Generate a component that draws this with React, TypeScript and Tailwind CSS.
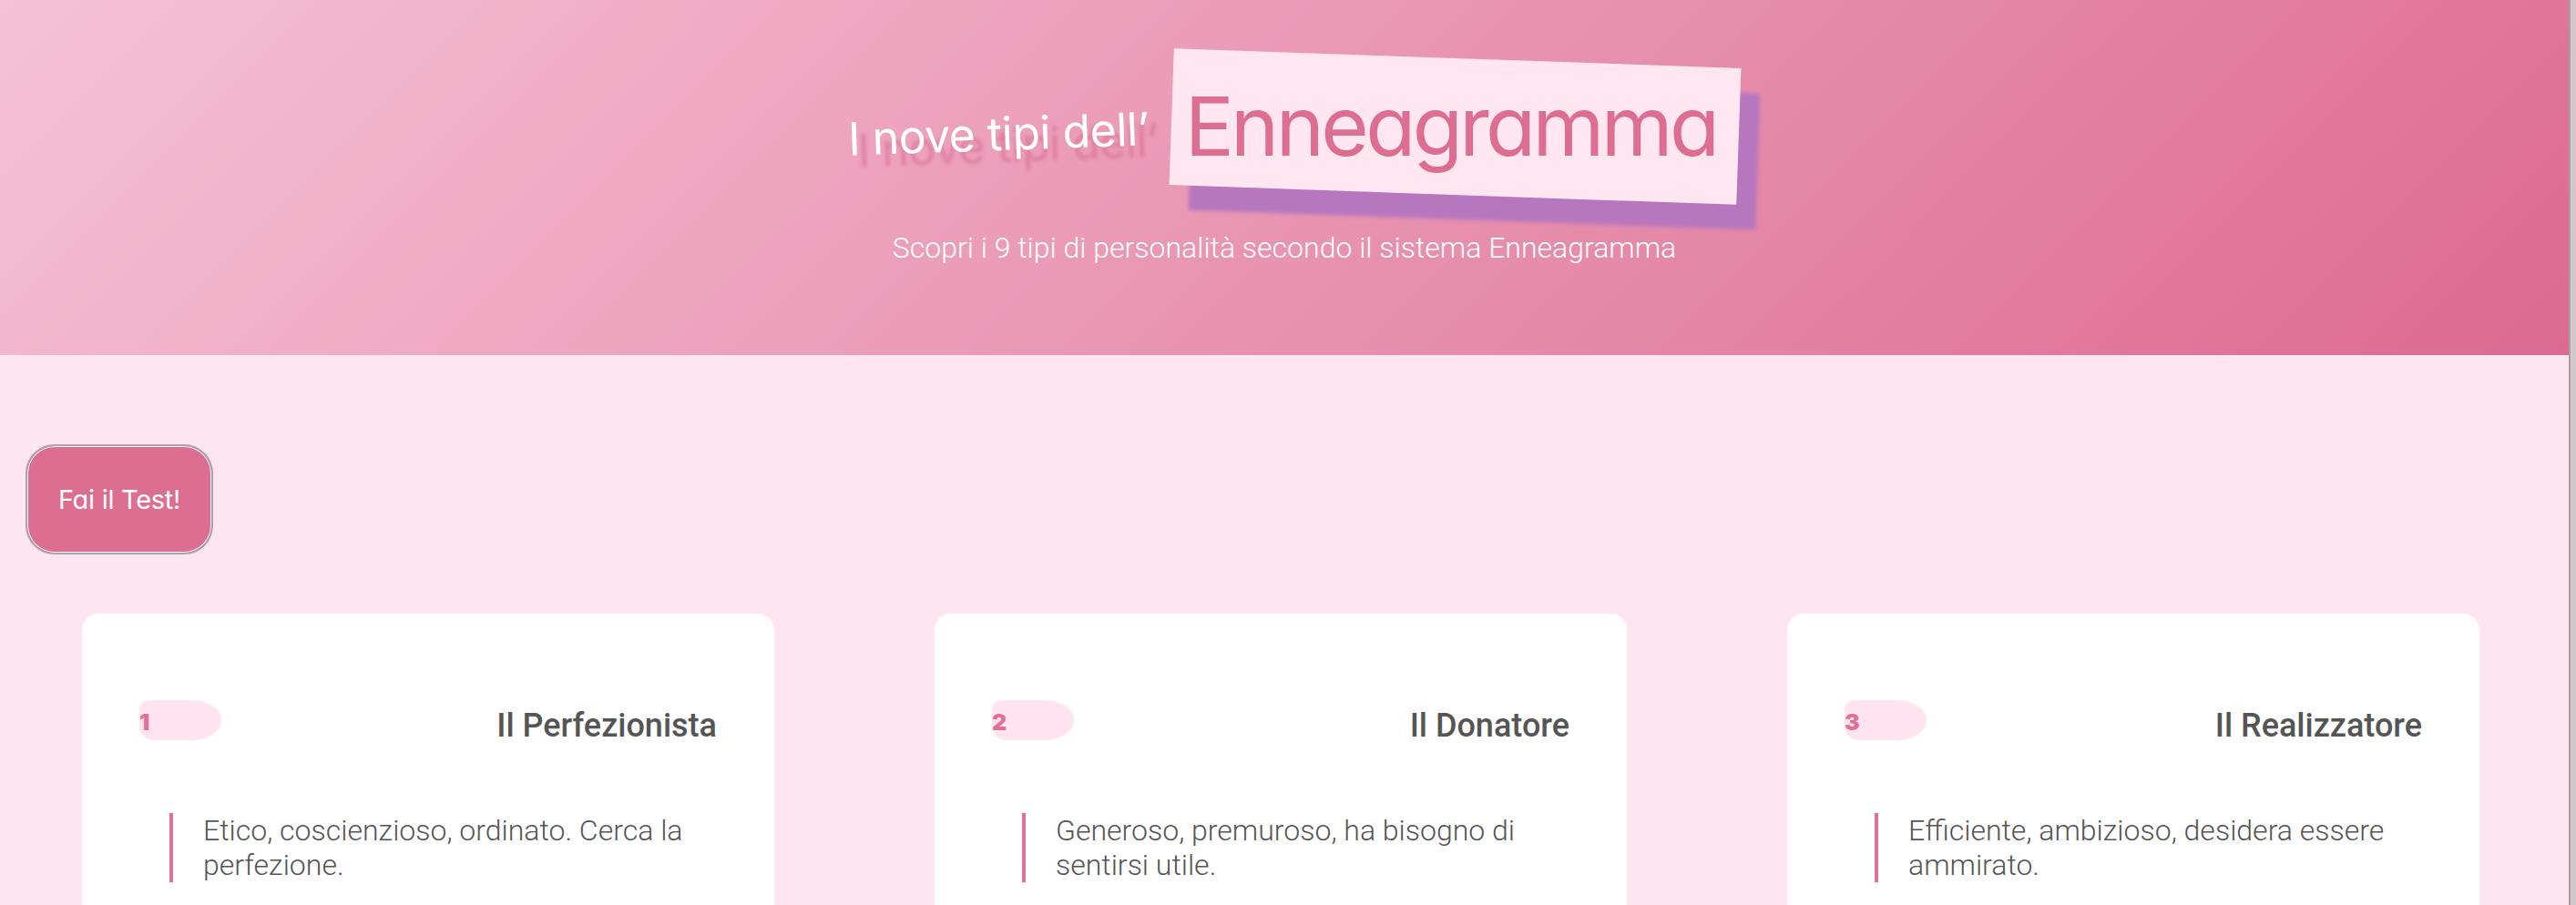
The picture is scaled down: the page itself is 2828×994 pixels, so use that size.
const types = [
  { n: 1, title: "Il Perfezionista", desc: "Etico, coscienzioso, ordinato. Cerca la perfezione." },
  { n: 2, title: "Il Donatore", desc: "Generoso, premuroso, ha bisogno di sentirsi utile." },
  { n: 3, title: "Il Realizzatore", desc: "Efficiente, ambizioso, desidera essere ammirato." },
];

const display = "font-['Inter',sans-serif] [font-feature-settings:'cv11']";

function TypeCard({ n, title, desc }: { n: number; title: string; desc: string }) {
  return (
    <div className="rounded-[18px] bg-white px-[63px] pt-[95px] pb-[60px]">
      <div className="flex items-start justify-between">
        <div className="relative h-[44px] w-[90px] rounded-[10px_32px_32px_16px/10px_22px_22px_16px] bg-[#ffe4ef]">
          <span className="absolute left-0 top-[12px] font-['Inter',sans-serif] text-[25px] font-black leading-[25px] text-[#e07095]">
            {n}
          </span>
        </div>
        <h2 className="mt-[4px] font-['Roboto',sans-serif] text-[36px] font-medium leading-[48px] text-[#555]">
          {title}
        </h2>
      </div>
      <p className="ml-[33px] mt-[72px] border-l-4 border-[#e07095] pl-[33px] font-['Roboto',sans-serif] text-[32px] font-light leading-[38px] text-[#555]">
        {desc}
      </p>
    </div>
  );
}

export default function App() {
  return (
    <div className="flex h-[994px] w-full overflow-hidden bg-[#ffe5ef]">
      <div className="flex-1">
        <header className="h-[390px] bg-[linear-gradient(135deg,#f6c2d5_0%,#dc6a90_100%)] pt-[64px]">
          <div className="flex items-baseline justify-center gap-[24px] pl-[20px]">
            <span
              className={`${display} -translate-y-[6px] -rotate-2 text-[50px] tracking-[-0.01em] text-white [text-shadow:10px_13px_4px_rgba(214,98,140,0.55)]`}
            >
              I nove tipi dell’
            </span>
            <span className="relative inline-block pl-[15px] pr-[24px] py-[21px]">
              <span className="absolute inset-0 rotate-2 bg-[#ffe6f0] shadow-[22px_27px_4px_#b777be]" />
              <span className={`${display} relative text-[90px] leading-[108px] tracking-[-0.04em] text-[#dd6d91]`}>
                Enneagramma
              </span>
            </span>
          </div>
          <p className="mt-[36px] text-center font-['Roboto',sans-serif] text-[32px] font-light leading-[45px] text-white">
            Scopri i 9 tipi di personalità secondo il sistema Enneagramma
          </p>
        </header>

        <main className="pt-[98px]">
          <button
            className={`${display} ml-[28px] h-[121px] w-[206px] rounded-[32px] border-2 border-[#b59ea7] bg-[#dc6e91] text-[29px] tracking-[-0.01em] text-white shadow-[inset_0_0_0_1px_#fff]`}
          >
            Fai il Test!
          </button>

          <div className="mt-[65px] grid grid-cols-[repeat(3,760px)] gap-x-[176px] pl-[90px]">
            {types.map((t) => (
              <TypeCard key={t.n} {...t} />
            ))}
          </div>
        </main>
      </div>
      <div className="w-[8px] border-l-2 border-[#a99ea2] bg-[#d3c8cc]" />
    </div>
  );
}
